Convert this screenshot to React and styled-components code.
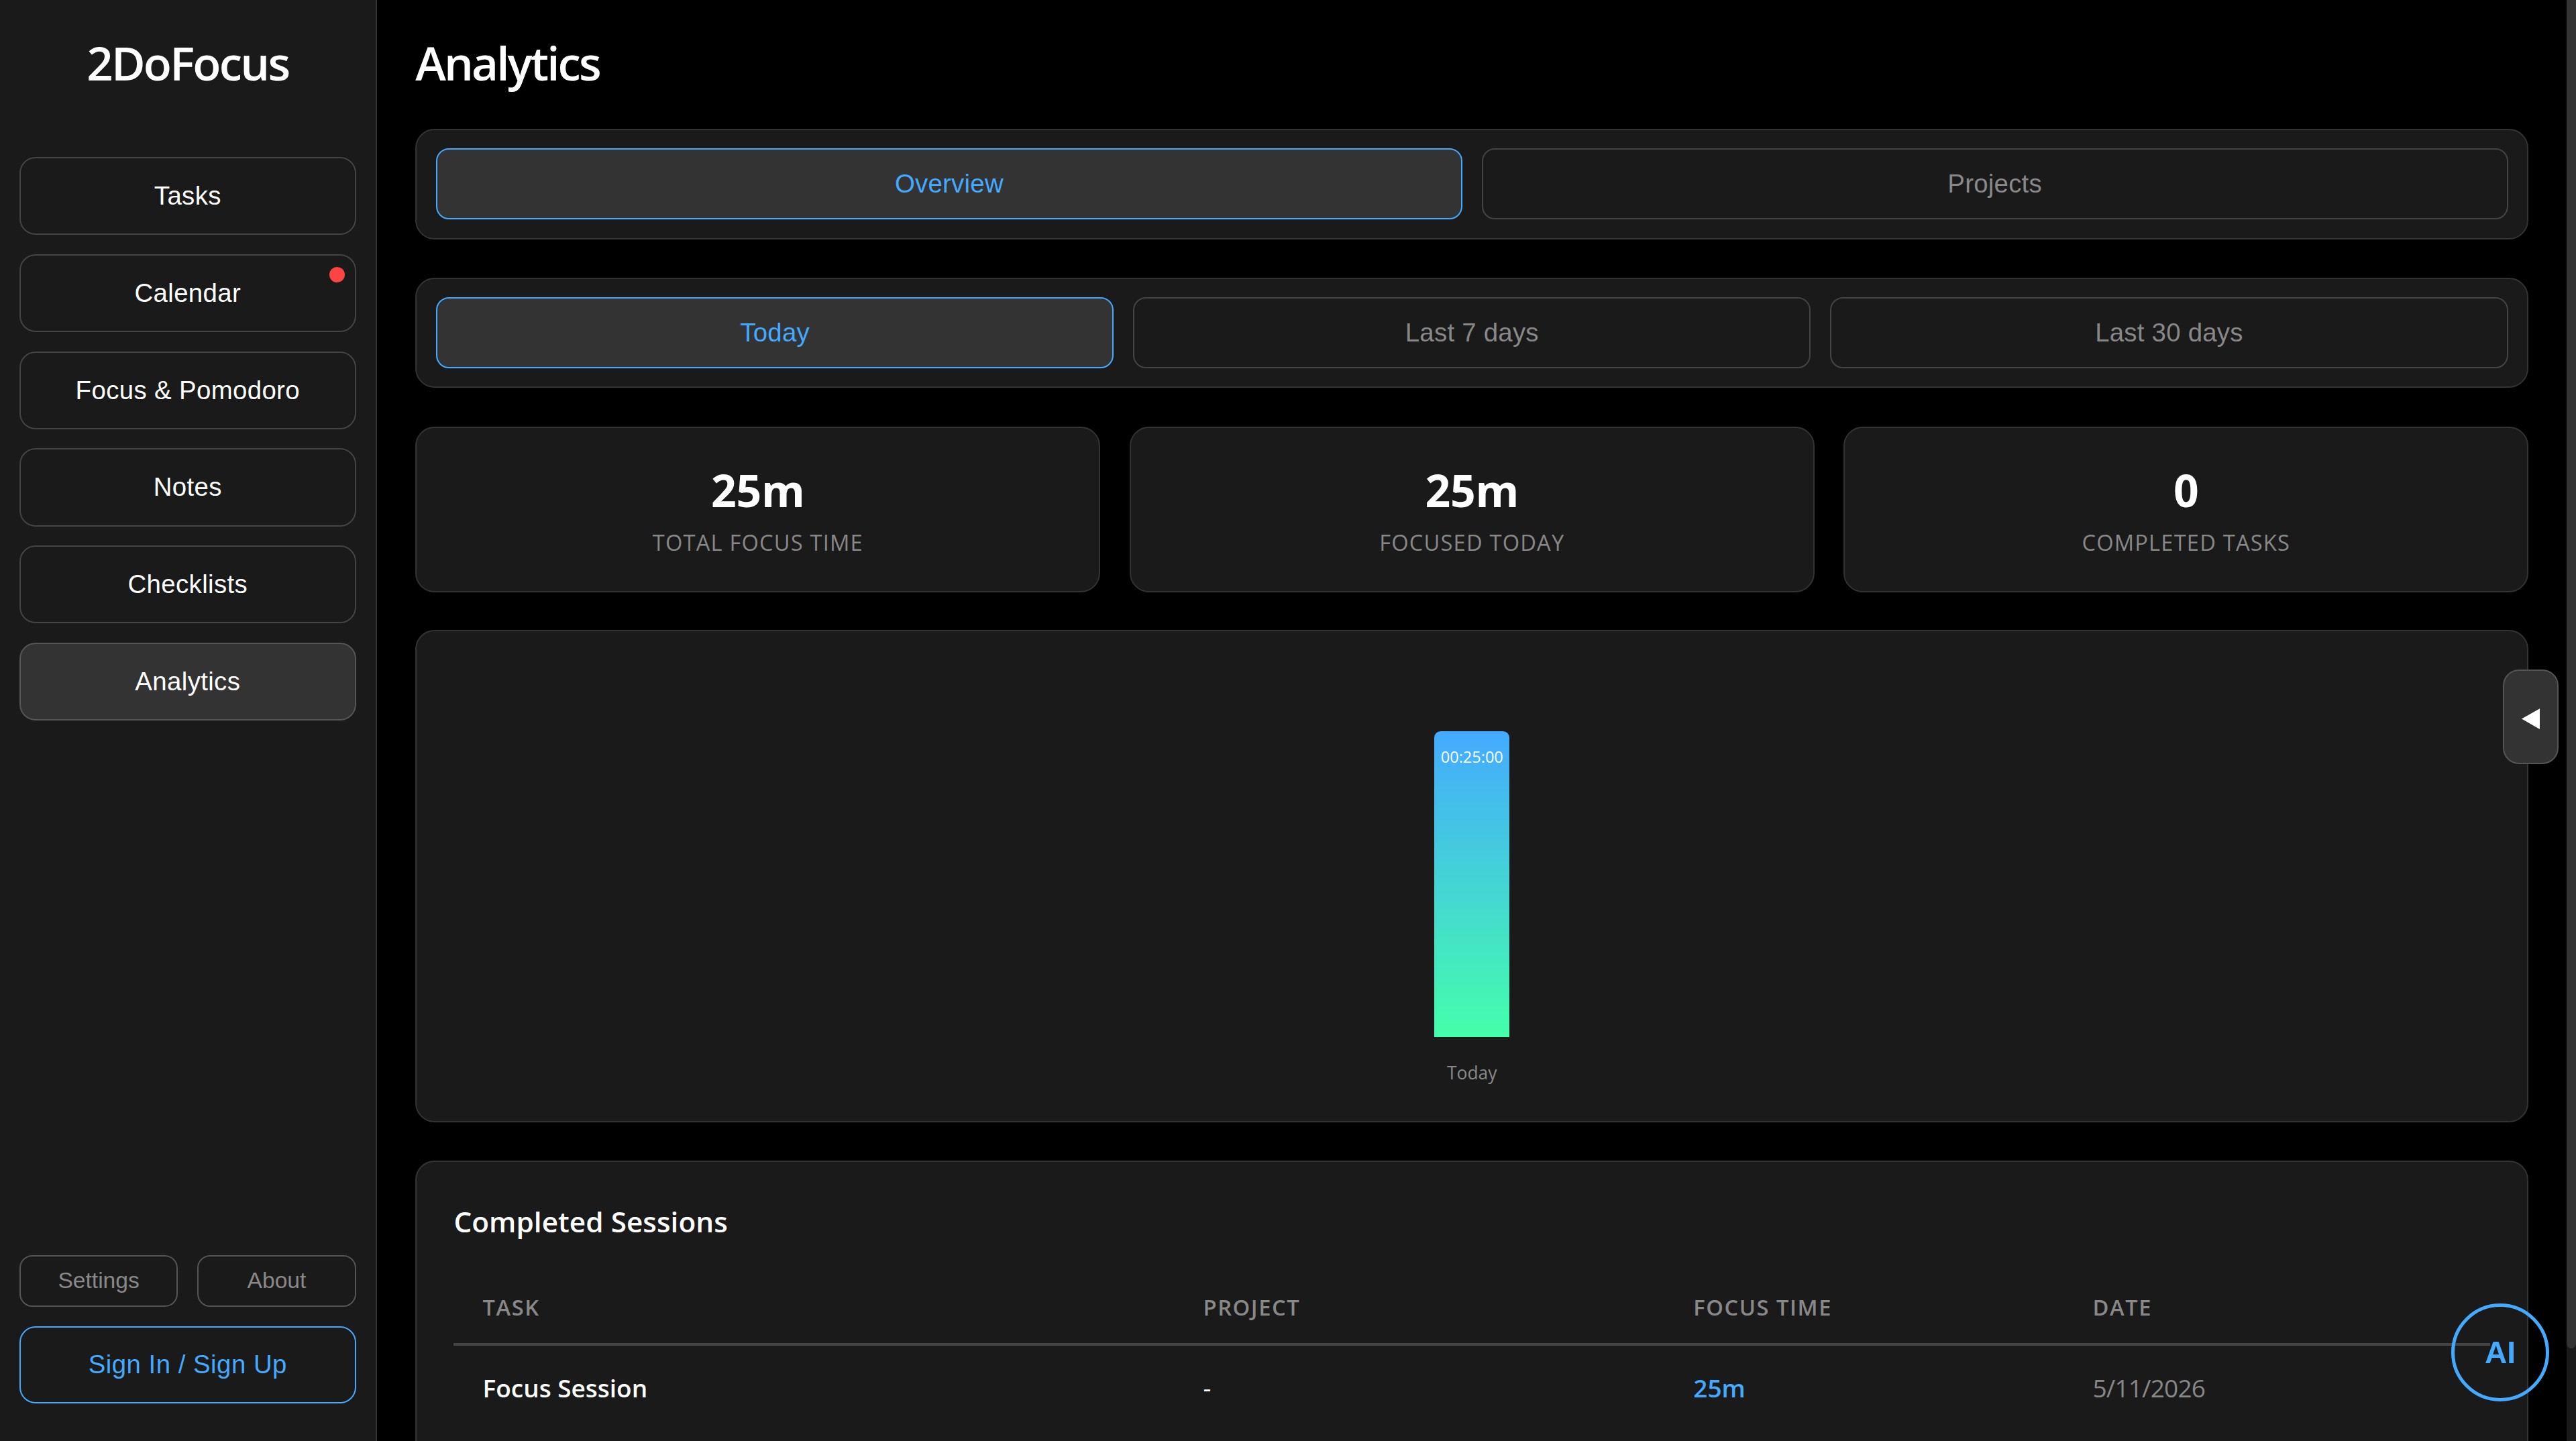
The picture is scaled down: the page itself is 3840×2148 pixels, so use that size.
import React from "react";
import styled, { createGlobalStyle } from "styled-components";

const UI = `"Open Sans", "Noto Sans", sans-serif`;
const ARIAL = `"Liberation Sans", Arial, sans-serif`;
const BLUE = "#44aaff";

const Global = createGlobalStyle`
  html, body { margin: 0; padding: 0; background: #000; overflow: hidden; }
  * { box-sizing: border-box; }
  body { font-family: ${UI}; color: #fff; }
`;

const Shell = styled.div`
  zoom: 2.4;
  width: 1600px;
  height: 895px;
  display: flex;
  overflow: hidden;
  background: #000;
`;

const Sidebar = styled.aside`
  width: 234px;
  flex: none;
  height: 100%;
  background: #1a1a1a;
  border-right: 1px solid #333;
  padding: 0 12px 23.4px;
  display: flex;
  flex-direction: column;
`;

const Logo = styled.div`
  height: 97.6px;
  padding-bottom: 20px;
  display: flex;
  align-items: center;
  justify-content: center;
  font-size: 28.8px;
  font-weight: 600;
  letter-spacing: -1.15px;
  color: #fff;
`;

const Nav = styled.nav`
  display: flex;
  flex-direction: column;
  gap: 11.9px;
`;

const NavItem = styled.button`
  position: relative;
  height: 48.4px;
  width: 100%;
  border-radius: 10px;
  border: 1px solid ${(p) => (p.$active ? "#555" : "#444")};
  background: ${(p) => (p.$active ? "#333" : "#1a1a1a")};
  color: #fff;
  font: 400 16px ${ARIAL};
  letter-spacing: 0.15px;
  text-align: center;
  padding: 0;
`;

const Dot = styled.span`
  position: absolute;
  top: 7px;
  right: 6px;
  width: 9.6px;
  height: 9.6px;
  border-radius: 50%;
  background: #f44;
`;

const SideFooter = styled.div`
  margin-top: auto;
  display: flex;
  flex-direction: column;
  gap: 12px;
`;

const SmallRow = styled.div`
  display: grid;
  grid-template-columns: 1fr 1fr;
  gap: 12px;
`;

const SmallButton = styled.button`
  height: 32px;
  border-radius: 8px;
  border: 1px solid #555;
  background: #1a1a1a;
  color: #888;
  font: 400 14px ${ARIAL};
  padding: 0;
`;

const SignIn = styled.button`
  height: 48px;
  border-radius: 10px;
  border: 1px solid ${BLUE};
  background: #1a1a1a;
  color: ${BLUE};
  font: 400 16px ${ARIAL};
  letter-spacing: 0.2px;
  padding: 0;
`;

const Main = styled.main`
  flex: 1;
  min-width: 0;
  height: 100%;
  overflow: hidden;
  padding: 0 23.6px 0 24px;
`;

const ScrollTrack = styled.div`
  flex: none;
  width: 5.83px;
  height: 100%;
  background: #1a1a1a;
`;

const ScrollThumb = styled.div`
  height: 837.5px;
  background: #333;
  border-radius: 0 0 3px 3px;
`;

const Title = styled.h1`
  margin: 0;
  height: 80.2px;
  padding-bottom: 3px;
  display: flex;
  align-items: center;
  font-size: 28.8px;
  font-weight: 600;
  letter-spacing: -1.2px;
  color: #fff;
`;

const Panel = styled.section`
  background: #1a1a1a;
  border: 1px solid #333;
  border-radius: 12px;
  margin-bottom: 24px;
`;

const TabBar = styled(Panel)`
  height: 68.4px;
  padding: 11.2px 12px;
  display: grid;
  grid-template-columns: repeat(${(p) => p.$cols}, 1fr);
  gap: 12px;
`;

const Tab = styled.button`
  height: 44px;
  border-radius: 8px;
  border: 1px solid ${(p) => (p.$active ? BLUE : "#444")};
  background: ${(p) => (p.$active ? "#333" : "#1a1a1a")};
  color: ${(p) => (p.$active ? BLUE : "#888")};
  font: 400 16px ${ARIAL};
  letter-spacing: 0.1px;
  padding: 0;
`;

const Stats = styled.div`
  display: grid;
  grid-template-columns: repeat(3, 1fr);
  gap: 18px;
  margin-bottom: 23.4px;
`;

const Stat = styled.div`
  height: 103px;
  background: #1a1a1a;
  border: 1px solid #333;
  border-radius: 12px;
  display: flex;
  flex-direction: column;
  align-items: center;
  padding-top: 19.4px;
`;

const StatValue = styled.div`
  font-size: 27.5px;
  font-weight: 700;
  line-height: 38px;
  letter-spacing: -0.1px;
  color: #fff;
`;

const StatLabel = styled.div`
  margin-top: 4px;
  font-size: 13.6px;
  line-height: 20px;
  letter-spacing: 0.5px;
  color: #888;
  text-transform: uppercase;
`;

const ChartPanel = styled(Panel)`
  height: 305.6px;
  padding-top: 62px;
  display: flex;
  flex-direction: column;
  align-items: center;
`;

const Bar = styled.div`
  width: 46.7px;
  height: 190px;
  border-radius: 4px 4px 0 0;
  background: linear-gradient(180deg, #44aaff 0%, #44ffaa 100%);
  color: #fff;
  font-size: 9.8px;
  line-height: 14px;
  text-align: center;
  padding-top: 9px;
`;

const BarLabel = styled.div`
  margin-top: 14px;
  font-size: 11px;
  line-height: 16px;
  color: #888;
`;

const SessionsPanel = styled(Panel)`
  padding: 24px 23px 24px;
`;

const SessionsTitle = styled.h2`
  margin: 0 0 18px;
  font-size: 17.6px;
  line-height: 26px;
  font-weight: 600;
  letter-spacing: 0.03px;
  color: #fff;
`;

const Row = styled.div`
  display: grid;
  grid-template-columns: 448.5px 304.5px 248px 262px;
  align-items: center;
  height: ${(p) => p.$h}px;
  border-bottom: ${(p) => (p.$head ? "2px solid #444" : "none")};
`;

const HeadCell = styled.div`
  padding-left: 17px;
  &:first-child { padding-left: 18px; }
  font-size: 13.6px;
  font-weight: 600;
  letter-spacing: 0.65px;
  color: #888;
  text-transform: uppercase;
`;

const Cell = styled.div`
  padding-left: 17px;
  &:first-child { padding-left: 18px; }
  font-size: 15.4px;
  font-weight: ${(p) => p.$w || 400};
  letter-spacing: ${(p) => p.$ls || "0px"};
  color: ${(p) => p.$c || "#fff"};
`;

const SideToggle = styled.button`
  position: fixed;
  right: 11px;
  top: 416px;
  width: 34.4px;
  height: 58.6px;
  border-radius: 10px;
  border: 1px solid #555;
  background: #333;
  padding: 2px 0 0;
  display: flex;
  align-items: center;
  justify-content: center;
`;

const AiButton = styled.button`
  position: fixed;
  right: 16.6px;
  bottom: 24.6px;
  width: 61px;
  height: 61px;
  border-radius: 50%;
  border: 2.1px solid ${BLUE};
  background: transparent;
  color: ${BLUE};
  font: 700 19.2px ${ARIAL};
  padding: 0;
`;

const navItems = ["Tasks", "Calendar", "Focus & Pomodoro", "Notes", "Checklists", "Analytics"];
const stats = [
  ["25m", "Total Focus Time"],
  ["25m", "Focused Today"],
  ["0", "Completed Tasks"],
];

export default function App() {
  return (
    <Shell>
      <Global />
      <Sidebar>
        <Logo>2DoFocus</Logo>
        <Nav>
          {navItems.map((n) => (
            <NavItem key={n} $active={n === "Analytics"}>
              {n}
              {n === "Calendar" && <Dot />}
            </NavItem>
          ))}
        </Nav>
        <SideFooter>
          <SmallRow>
            <SmallButton>Settings</SmallButton>
            <SmallButton>About</SmallButton>
          </SmallRow>
          <SignIn>Sign In / Sign Up</SignIn>
        </SideFooter>
      </Sidebar>
      <Main>
        <Title>Analytics</Title>
        <TabBar $cols={2}>
          <Tab $active>Overview</Tab>
          <Tab>Projects</Tab>
        </TabBar>
        <TabBar $cols={3}>
          <Tab $active>Today</Tab>
          <Tab>Last 7 days</Tab>
          <Tab>Last 30 days</Tab>
        </TabBar>
        <Stats>
          {stats.map(([v, l]) => (
            <Stat key={l}>
              <StatValue>{v}</StatValue>
              <StatLabel>{l}</StatLabel>
            </Stat>
          ))}
        </Stats>
        <ChartPanel>
          <Bar>00:25:00</Bar>
          <BarLabel>Today</BarLabel>
        </ChartPanel>
        <SessionsPanel>
          <SessionsTitle>Completed Sessions</SessionsTitle>
          <Row $head $h={46}>
            <HeadCell>Task</HeadCell>
            <HeadCell>Project</HeadCell>
            <HeadCell>Focus Time</HeadCell>
            <HeadCell>Date</HeadCell>
          </Row>
          <Row $h={52}>
            <Cell $w={600}>Focus Session</Cell>
            <Cell>-</Cell>
            <Cell $w={600} $c={BLUE}>25m</Cell>
            <Cell $c="#888" $ls="-0.35px">5/11/2026</Cell>
          </Row>
        </SessionsPanel>
      </Main>
      <ScrollTrack>
        <ScrollThumb />
      </ScrollTrack>
      <SideToggle aria-label="Toggle panel">
        <svg width="11.4" height="13" viewBox="0 0 11.4 13">
          <polygon points="0,6.5 11.4,0 11.4,13" fill="#fff" />
        </svg>
      </SideToggle>
      <AiButton>AI</AiButton>
    </Shell>
  );
}
